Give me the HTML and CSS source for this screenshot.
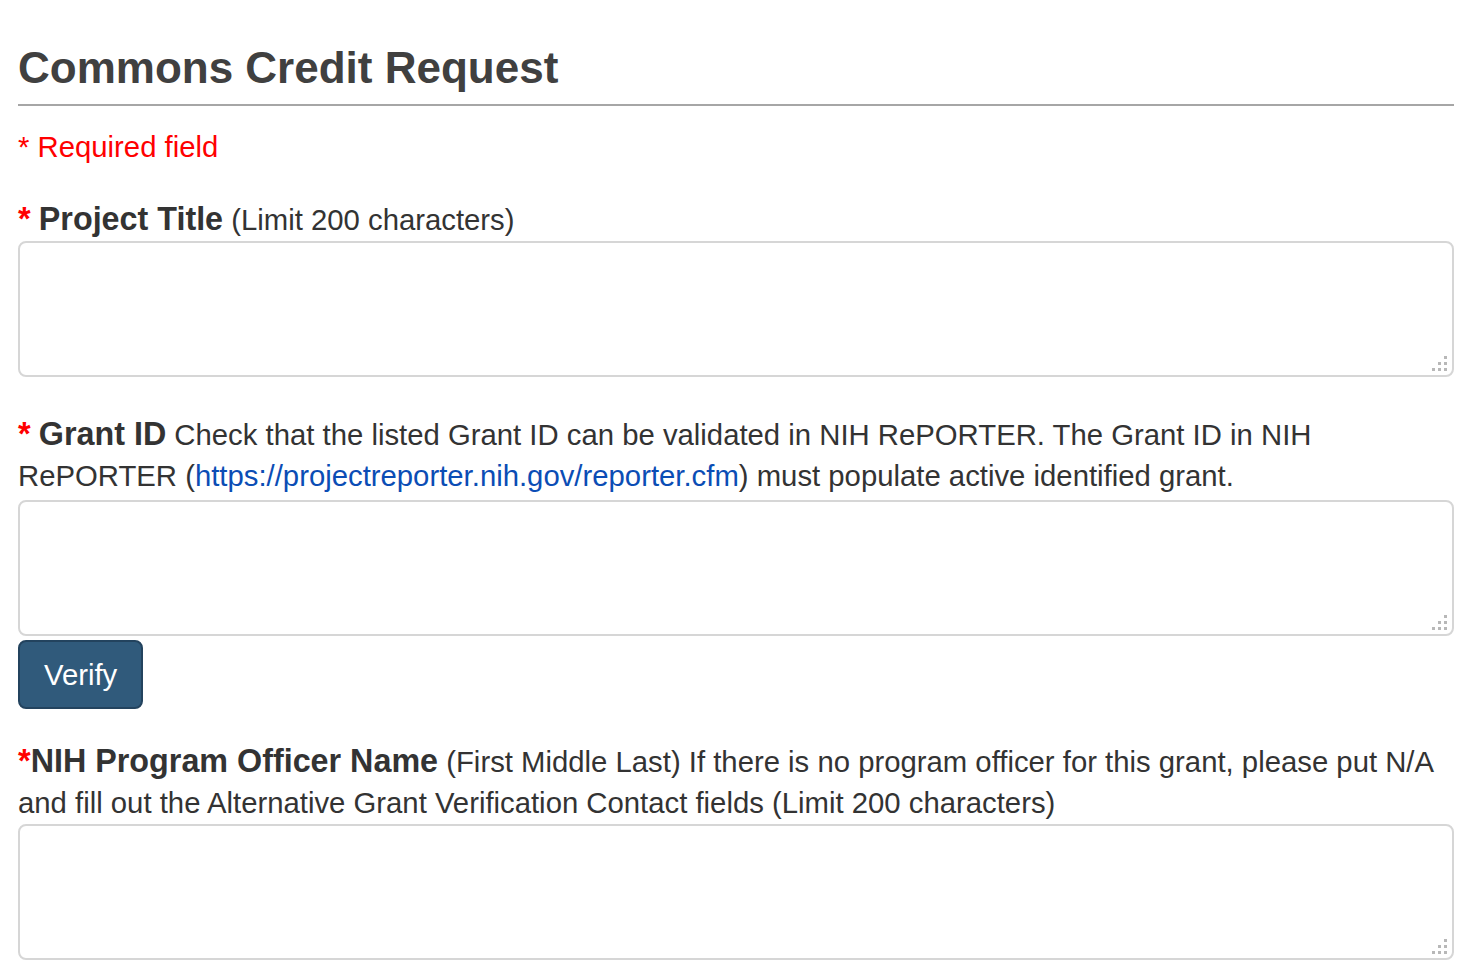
FILE: index.html
```html
<!DOCTYPE html>
<html lang="en">
<head>
<meta charset="utf-8">
<title>Commons Credit Request</title>
<link rel="stylesheet" href="styles.css">
</head>
<body>
<main class="page">
  <h2 class="title">Commons Credit Request</h2>
  <p class="required-note">* Required field</p>
  <form class="form">
    <div class="group group-title">
      <label class="label" for="title"><span class="star">*</span> <b class="name">Project Title</b> (Limit 200 characters)</label>
      <div class="field-wrap">
        <textarea id="title" class="field"></textarea>
        <svg class="grip" width="15" height="15" viewBox="0 0 15 15" aria-hidden="true"><rect x="12" y="0" width="3" height="3"/><rect x="6" y="6" width="3" height="3"/><rect x="12" y="6" width="3" height="3"/><rect x="0" y="12" width="3" height="3"/><rect x="6" y="12" width="3" height="3"/><rect x="12" y="12" width="3" height="3"/></svg>
      </div>
    </div>
    <div class="group group-grant">
      <label class="label" for="grant"><span class="star">*</span> <b class="name">Grant ID</b> Check that the listed Grant ID can be validated in NIH RePORTER. The Grant ID in NIH RePORTER (<a class="link" href="#">https://projectreporter.nih.gov/reporter.cfm</a>) must populate active identified grant.</label>
      <div class="field-wrap field-wrap-grant">
        <textarea id="grant" class="field"></textarea>
        <svg class="grip" width="15" height="15" viewBox="0 0 15 15" aria-hidden="true"><rect x="12" y="0" width="3" height="3"/><rect x="6" y="6" width="3" height="3"/><rect x="12" y="6" width="3" height="3"/><rect x="0" y="12" width="3" height="3"/><rect x="6" y="12" width="3" height="3"/><rect x="12" y="12" width="3" height="3"/></svg>
      </div>
      <button type="button" class="btn">Verify</button>
    </div>
    <div class="group group-po">
      <label class="label" for="po"><span class="star">*</span><b class="name">NIH Program Officer Name</b> (First Middle Last) If there is no program officer for this grant, please put N/A and fill out the Alternative Grant Verification Contact fields (Limit 200 characters)</label>
      <div class="field-wrap field-wrap-po">
        <textarea id="po" class="field"></textarea>
        <svg class="grip" width="15" height="15" viewBox="0 0 15 15" aria-hidden="true"><rect x="12" y="0" width="3" height="3"/><rect x="6" y="6" width="3" height="3"/><rect x="12" y="6" width="3" height="3"/><rect x="0" y="12" width="3" height="3"/><rect x="6" y="12" width="3" height="3"/><rect x="12" y="12" width="3" height="3"/></svg>
      </div>
    </div>
  </form>
</main>
</body>
</html>
```
FILE: styles.css
```css
html, body {
  margin: 0;
  padding: 0;
  background: #fff;
}
body {
  font-family: "Liberation Sans", Arial, sans-serif;
  font-size: 29.3px;
  line-height: 41px;
  color: #333;
}
.page {
  padding: 0 17px 0 18px;
}
.title {
  margin: 44px 0 0;
  padding-bottom: 12px;
  border-bottom: 2px solid #a6a6a6;
  font-size: 44px;
  line-height: 48px;
  font-weight: bold;
  color: #404040;
}
.required-note {
  margin: 20px 0 0;
  color: #f00;
}
.form {
  margin: 0;
}
.group {
  display: flex;
  flex-direction: column;
  align-items: flex-start;
}
.group-title { margin-top: 32px; }
.group-title .field-wrap { margin-top: 1px; }
.group-grant { margin-top: 37px; }
.group-po { margin-top: 32px; }
.label {
  display: block;
  width: 100%;
}
.star {
  color: #f00;
  font-weight: bold;
  font-size: 32.5px;
}
.name {
  font-size: 32.3px;
  color: #333;
}
.link {
  color: #0b4db5;
  text-decoration: none;
}
.field-wrap {
  position: relative;
  width: 100%;
}
.field-wrap-grant { margin-top: 4px; }
.field-wrap-po { margin-top: 1px; }
.field {
  display: block;
  box-sizing: border-box;
  width: 100%;
  height: 136px;
  margin: 0;
  border: 2px solid #d6d6d6;
  border-radius: 8px;
  background: #fff;
  font-family: inherit;
  font-size: 29px;
  resize: none;
}
.grip {
  position: absolute;
  right: 7px;
  bottom: 6px;
  fill: #b8b8b8;
}
.btn {
  margin-top: 4px;
  padding: 11px 24px;
  border: 2px solid #23435e;
  border-radius: 8px;
  background: #305a7b;
  color: #fff;
  font-family: inherit;
  font-size: 29.3px;
  line-height: 43px;
  cursor: pointer;
}
```
